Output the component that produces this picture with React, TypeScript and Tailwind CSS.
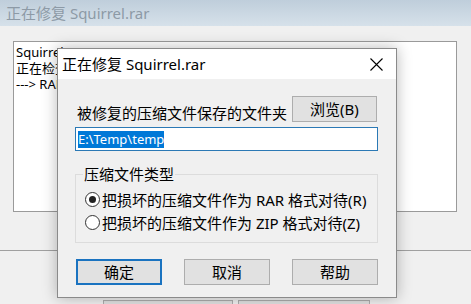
const font = "font-['Noto_Sans','Noto_Sans_CJK_SC',sans-serif]";

function Radio({ checked, label }: { checked?: boolean; label: string }) {
  return (
    <div className="flex h-[23px] items-center">
      <div className="flex h-[15px] w-[15px] items-center justify-center rounded-full border border-[#333] bg-white">
        {checked && <div className="h-[7px] w-[7px] rounded-full bg-[#222]" />}
      </div>
      <span className="ml-[2px] text-[15px] leading-[18px] text-black">{label}</span>
    </div>
  );
}

function Button({ label, focused }: { label: string; focused?: boolean }) {
  return (
    <div
      className={
        focused
          ? "flex h-[26px] w-[86px] items-center justify-center border-2 border-[#1a73c0] bg-[#e1e1e1] text-[15px] text-black"
          : "flex h-[26px] w-[86px] items-center justify-center border border-[#adadad] bg-[#e1e1e1] text-[15px] text-black"
      }
    >
      {label}
    </div>
  );
}

export default function App() {
  return (
    <div className={`relative h-[304px] w-[471px] overflow-hidden bg-[#f0f0f0] ${font}`}>
      {/* background window */}
      <div className="flex h-[26px] items-center bg-gradient-to-b from-[#bfcedb] to-[#d6e1ea] pl-[6px] text-[15px] text-[#8d9aa6]">
        正在修复 Squirrel.rar
      </div>
      <div className="pl-[13px] pt-[15px]">
        <div className="h-[171px] w-[444px] border border-[#9a9a9a] bg-white px-[2px] pt-[2px] text-[13px] leading-[16px] text-black">
          <div>Squirrel.rar</div>
          <div>正在检查 Squirrel.rar</div>
          <div>---&gt; RAR 4.x 格式</div>
        </div>
      </div>
      <div className="mt-[38px] h-px bg-[#a0a0a0]" />
      <div className="mt-[49px] flex gap-[5px] pl-[103px]">
        <div className="h-[26px] w-[130px] border border-[#adadad] bg-[#e1e1e1]" />
        <div className="h-[26px] w-[132px] border border-[#adadad] bg-[#e1e1e1]" />
      </div>

      {/* dialog */}
      <div className="absolute left-[57px] top-[48px] flex h-[250px] w-[340px] flex-col border border-[#8a8a8a] bg-[#f0f0f0] shadow-[0_0_14px_rgba(0,0,0,0.28)]">
        <div className="flex h-[30px] items-center justify-between bg-white pl-[4px] pr-[13px]">
          <span className="text-[15px] text-black">正在修复 Squirrel.rar</span>
          <svg width="13" height="13" viewBox="0 0 13 13" className="text-black">
            <path d="M0.5 0.5 L12.5 12.5 M12.5 0.5 L0.5 12.5" stroke="currentColor" strokeWidth="1.1" fill="none" />
          </svg>
        </div>
        <div className="flex-1 pl-[17px] pr-[18px] pt-[17px]">
          <div className="flex items-end justify-between">
            <span className="ml-[2px] text-[15px] leading-[18px] text-black">
              被修复的压缩文件保存的文件夹
            </span>
            <div className="mr-[1px] flex h-[26px] w-[85px] items-center justify-center border border-[#adadad] bg-[#e1e1e1] text-[15px] text-black">
              浏览(B)
            </div>
          </div>
          <div className="mt-[5px] flex h-[24px] items-center border border-[#2b79b5] bg-white pl-[2px]">
            <span className="bg-[#0078d7] text-[13px] leading-[17px] text-white">
              {"E:\\Temp\\temp"}
            </span>
          </div>
          <fieldset className="mt-[14px] border border-[#dcdcdc] pb-[8px] pl-[9px] pt-[5px]">
            <legend className="ml-[-2px] px-[1px] text-[15px] leading-[18px] text-black">
              压缩文件类型
            </legend>
            <Radio checked label="把损坏的压缩文件作为 RAR 格式对待(R)" />
            <Radio label="把损坏的压缩文件作为 ZIP 格式对待(Z)" />
          </fieldset>
          <div className="ml-[1px] mt-[16px] flex gap-[22px]">
            <Button label="确定" focused />
            <Button label="取消" />
            <Button label="帮助" />
          </div>
        </div>
      </div>
    </div>
  );
}
